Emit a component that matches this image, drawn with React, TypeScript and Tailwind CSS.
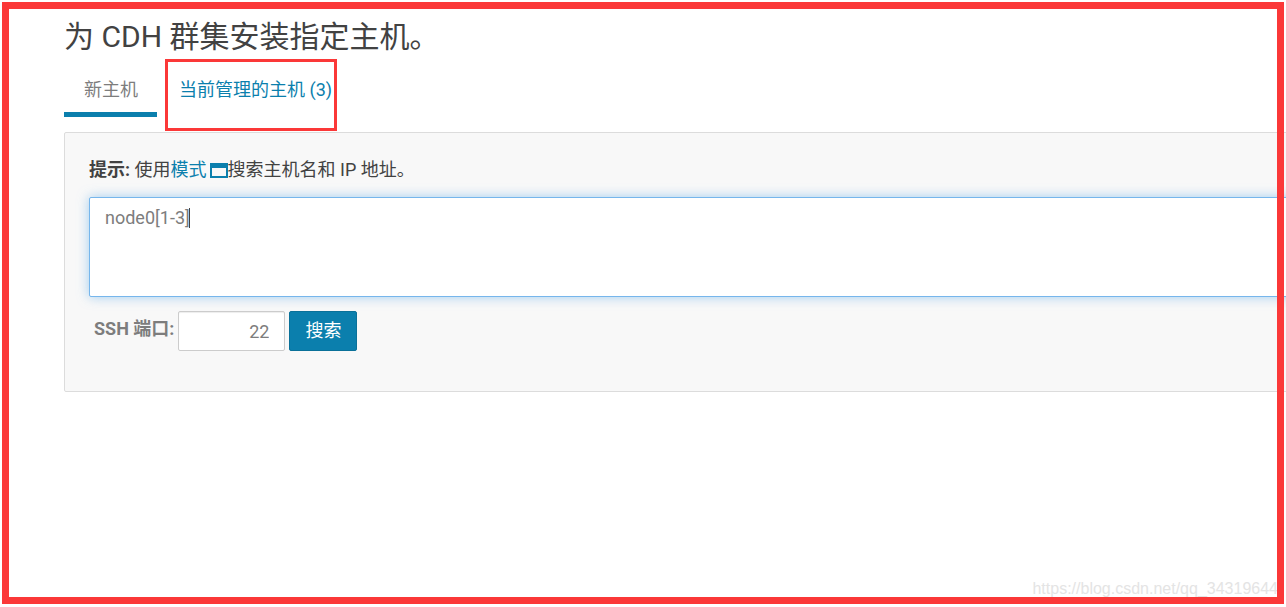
import { useState } from "react";

function WindowIcon() {
  return (
    <svg
      viewBox="0 0 18 15"
      className="ml-[3px] inline-block h-[15px] w-[18px] align-[-2px]"
      fill="currentColor"
      fillRule="evenodd"
      shapeRendering="crispEdges"
      aria-hidden="true"
    >
      <path d="M1 0h16q1 0 1 1v13q0 1-1 1H1q-1 0-1-1V1q0-1 1-1ZM2 5v8h14V5Z" />
    </svg>
  );
}

export default function App() {
  const [hosts, setHosts] = useState("node0[1-3]");
  const [port, setPort] = useState("22");

  return (
    <div className="relative min-h-screen overflow-hidden bg-white pt-[17px] pl-16 font-['Roboto','Noto_Sans_CJK_SC',sans-serif] text-lg leading-6 text-[#424242]">
      <h1 className="text-[30px] leading-10">为 CDH 群集安装指定主机。</h1>

      <nav className="mt-[3px] flex h-[72px] items-start gap-2">
        <a
          href="#new"
          aria-current="page"
          className="flex h-[57px] items-start border-b-[5px] border-[#0b7fad] pt-[18px] pr-[19px] pl-5 leading-6 text-[#7d7d7d]"
        >
          新主机
        </a>
        <a
          href="#managed"
          className="-mt-px flex h-[72px] items-start border-[3px] border-[#fb3838] pt-4 pr-0.5 pl-[11px] leading-6 whitespace-nowrap text-[#0b7fad]"
        >
          当前管理的主机 (3)
        </a>
      </nav>

      <section className="-mr-8 rounded-xs border border-[#dcdcdc] bg-[#f8f8f8] px-6 pt-[25px] pb-10">
        <p>
          <strong className="font-bold">提示:</strong> 使用
          <a href="#patterns" className="text-[#0b7fad]">
            模式
            <WindowIcon />
          </a>
          搜索主机名和 IP 地址。
        </p>

        <div className="relative -mr-6 mt-[15px]">
          <textarea
            aria-label="主机名和 IP 地址"
            value={hosts}
            onChange={(e) => setHosts(e.target.value)}
            className="block h-[100px] w-full resize-none rounded-xs border border-[#76b6ec] bg-white px-[15px] py-2 leading-6 text-[#7d7d7d] shadow-[0_0_12px_rgba(102,175,233,0.6)] outline-none"
          />
          <span className="absolute top-[11px] left-[100px] h-5 w-px bg-[#424242]" />
        </div>

        <form className="mt-[14px] flex items-center gap-1 pl-[5px]" onSubmit={(e) => e.preventDefault()}>
          <label htmlFor="port" className="pb-1 font-bold text-[#7d7d7d]">
            SSH 端口:
          </label>
          <input
            id="port"
            value={port}
            onChange={(e) => setPort(e.target.value)}
            className="h-10 w-[107px] rounded-xs border border-[#cccccc] bg-white px-[15px] text-right text-[#7d7d7d] shadow-[inset_0_1px_1px_rgba(0,0,0,0.075)] outline-none"
          />
          <button
            type="submit"
            className="h-10 rounded-xs border border-[#0a7199] bg-[#0b7fad] px-[15px] text-white"
          >
            搜索
          </button>
        </form>
      </section>

      <div className="pointer-events-none absolute right-2 bottom-2 font-['Liberation_Sans',sans-serif] text-base leading-5 text-[#e4e4e4]">
        https://blog.csdn.net/qq_34319644
      </div>
      <div className="pointer-events-none absolute inset-x-0.5 top-0.5 bottom-[3px] border-[7px] border-[#fb3838]" />
    </div>
  );
}
